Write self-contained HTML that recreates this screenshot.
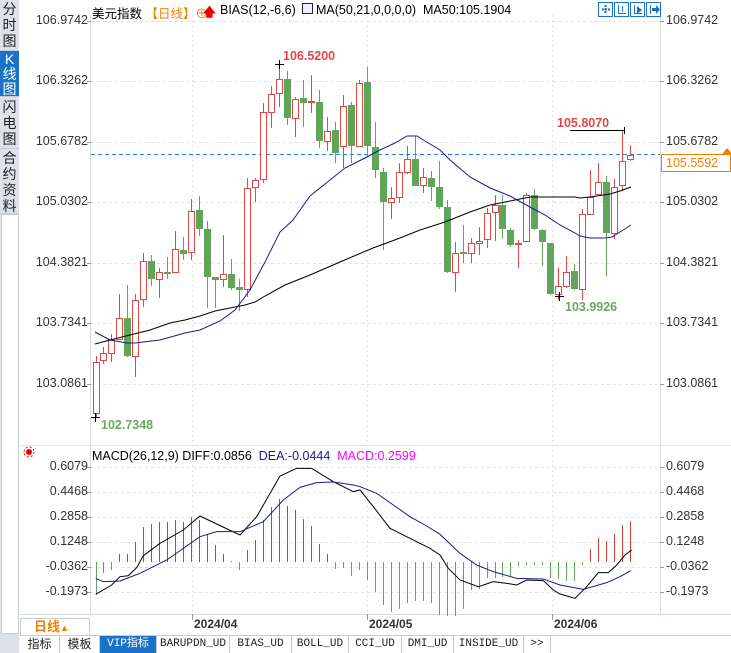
<!DOCTYPE html>
<html><head><meta charset="utf-8">
<style>
*{margin:0;padding:0;box-sizing:border-box}
body{width:731px;height:653px;overflow:hidden;background:#fff;font-family:"Liberation Sans","Noto Sans CJK SC",sans-serif;position:relative}
.side{position:absolute;left:0;top:0;width:19px;height:653px;background:#dde1ea}
.tab{position:absolute;left:0;width:19px;font-size:14px;line-height:16px;text-align:center;color:#222;border-bottom:1px solid #c8ccd6}
.ab{position:absolute;font-size:12.5px;color:#333}
.l{right:643px;text-align:right}
.r{left:666px}
.t{position:absolute;font-size:12.5px;white-space:nowrap;top:3px}
.btab{position:absolute;top:636px;height:17px;font-family:"Liberation Mono","Noto Sans CJK SC",monospace;font-size:11px;line-height:17px;text-align:center;border-right:1px solid #c8ccd6;color:#222;background:#fff}
</style></head><body>
<div class="side">
<div class="tab" style="top:1px;height:50px">分<br>时<br>图</div>
<div class="tab" style="top:51px;height:46px;background:#1a73c6;color:#fff;line-height:15px;padding-top:1px">K<br>线<br>图</div>
<div class="tab" style="top:99px;height:50px">闪<br>电<br>图</div>
<div class="tab" style="top:150px;height:64px">合<br>约<br>资<br>料</div>
<div style="position:absolute;top:214px;left:1px;width:18px;height:420px;background:#fff;border:1px solid #c8ccd6"></div>
</div>
<svg id="c" width="731" height="653" style="position:absolute;left:0;top:0"></svg>

<div class="t" style="left:92px">美元指数 <span style="color:#f08000">【日线】</span><span style="color:#f08000">⊕</span></div>
<div class="t" style="left:203px;color:#e00;font-weight:bold">🡅</div>
<div class="t" style="left:220px">BIAS(12,-6,6)</div>
<div style="position:absolute;left:302px;top:3px;width:11px;height:11px;border:1px solid #224;background:#eef"></div>
<div class="t" style="left:316px">MA(50,21,0,0,0,0)&nbsp; MA50:105.1904</div>

<div class="ab l" style="top:13px">106.9742</div>
<div class="ab l" style="top:73px">106.3262</div>
<div class="ab l" style="top:134px">105.6782</div>
<div class="ab l" style="top:194px">105.0302</div>
<div class="ab l" style="top:255px">104.3821</div>
<div class="ab l" style="top:315px">103.7341</div>
<div class="ab l" style="top:376px">103.0861</div>
<div class="ab r" style="top:13px">106.9742</div>
<div class="ab r" style="top:73px">106.3262</div>
<div class="ab r" style="top:134px">105.6782</div>
<div class="ab r" style="top:194px">105.0302</div>
<div class="ab r" style="top:255px">104.3821</div>
<div class="ab r" style="top:315px">103.7341</div>
<div class="ab r" style="top:376px">103.0861</div>
<div style="position:absolute;left:661px;top:154px;width:70px;height:18px;border:1px solid #f08000;color:#f08000;font-size:12.5px;line-height:16px;padding-left:4px;background:#fff">105.5592</div>

<div class="ab" style="left:283px;top:49px;color:#e04848;font-weight:bold">106.5200</div>
<div class="ab" style="left:557px;top:116px;color:#e04848;font-weight:bold">105.8070</div>
<div class="ab" style="left:565px;top:300px;color:#6aa860;font-weight:bold">103.9926</div>
<div class="ab" style="left:101px;top:418px;color:#6aa860;font-weight:bold">102.7348</div>

<div class="t" style="left:92px;top:449px">MACD(26,12,9) DIFF:0.0856 &nbsp;<span style="color:#1a1a90">DEA:-0.0444</span> &nbsp;<span style="color:#f0f">MACD:0.2599</span></div>
<div class="ab l" style="top:459px">0.6079</div>
<div class="ab l" style="top:484px">0.4468</div>
<div class="ab l" style="top:509px">0.2858</div>
<div class="ab l" style="top:534px">0.1248</div>
<div class="ab l" style="top:559px">-0.0362</div>
<div class="ab l" style="top:584px">-0.1973</div>
<div class="ab r" style="top:459px">0.6079</div>
<div class="ab r" style="top:484px">0.4468</div>
<div class="ab r" style="top:509px">0.2858</div>
<div class="ab r" style="top:534px">0.1248</div>
<div class="ab r" style="top:559px">-0.0362</div>
<div class="ab r" style="top:584px">-0.1973</div>

<div style="position:absolute;left:20px;top:618px;width:70px;height:18px;border:1px solid #c8ccd6;color:#f08000;font-weight:bold;font-size:13px;line-height:16px;padding-left:13px;background:#fff">日线<span style="font-size:9px">▲</span></div>
<div class="ab" style="left:194px;top:617px;font-weight:bold;font-size:12px">2024/04</div>
<div class="ab" style="left:369px;top:617px;font-weight:bold;font-size:12px">2024/05</div>
<div class="ab" style="left:554px;top:617px;font-weight:bold;font-size:12px">2024/06</div>

<div class="btab" style="left:20px;width:40px;font-family:'Liberation Sans','Noto Sans CJK SC',sans-serif;font-size:12px">指标</div>
<div class="btab" style="left:60px;width:40px;font-family:'Liberation Sans','Noto Sans CJK SC',sans-serif;font-size:12px">模板</div>
<div class="btab" style="left:100px;width:57px;background:#1a73c6;color:#fff">VIP指标</div>
<div class="btab" style="left:157px;width:73px">BARUPDN_UD</div>
<div class="btab" style="left:230px;width:62px">BIAS_UD</div>
<div class="btab" style="left:292px;width:57px">BOLL_UD</div>
<div class="btab" style="left:349px;width:53px">CCI_UD</div>
<div class="btab" style="left:402px;width:52px">DMI_UD</div>
<div class="btab" style="left:454px;width:70px">INSIDE_UD</div>
<div class="btab" style="left:524px;width:27px">&gt;&gt;</div>

<script>
var s=document.getElementById('c'),h='';
function L(x1,y1,x2,y2,c,w,d){h+='<line x1="'+x1+'" y1="'+y1+'" x2="'+x2+'" y2="'+y2+'" stroke="'+c+'" stroke-width="'+(w||1)+'"'+(d?' stroke-dasharray="'+d+'"':'')+'/>';}
function R(x,y,w,hh,c){h+='<rect x="'+x+'" y="'+y+'" width="'+w+'" height="'+hh+'" fill="'+c+'"/>';}
function P(pts,c){h+='<polyline fill="none" stroke="'+c+'" stroke-width="1" points="'+pts.map(function(p){return p.join(',')}).join(' ')+'"/>';}
L(90.5,15,90.5,615,'#d8dce4');L(660.5,15,660.5,615,'#d8dce4');
L(20,445.5,731,445.5,'#e4e6ea');L(20,614.5,731,614.5,'#d8dce4');L(20,635.5,731,635.5,'#c8ccd6');
[21,81,142,202,263,323,384,467,492,517,542,567,592].forEach(function(y){L(91,y+.5,660,y+.5,'#e2e2e2',1,'3,3');L(87,y+.5,91,y+.5,'#999');L(660,y+.5,664,y+.5,'#999')});
[192,367,552].forEach(function(x){L(x+.5,15,x+.5,614,'#e2e2e2',1,'2,3');L(x+.5,614,x+.5,620,'#999')});
L(91,154.5,660,154.5,'#1e7ff0',1,'4,3');
[598,614,630,646].forEach(function(x){h+='<rect x="'+(x+.5)+'" y="2.5" width="14" height="14" fill="#fff" stroke="#1a73c6"/>';});
L(602,9.5,610,9.5,'#1a73c6',2,'2,1');L(605.5,5,605.5,14,'#1a73c6',2,'2,1');
L(618.5,5,618.5,14,'#1a73c6');L(618,13.5,626,13.5,'#1a73c6');L(622.5,6,622.5,12,'#1a73c6');
L(634.5,5,634.5,14,'#1a73c6');L(634,13.5,642,13.5,'#1a73c6');h+='<path d="M637 6l5 4-5 4z" fill="#1a73c6"/>';
L(650.5,5,650.5,14,'#1a73c6');h+='<path d="M652 8h4v-3l4 4.5-4 4.5v-3h-4z" fill="#1a73c6"/>';
var C=[[362,413,356,418,'r'],[353,360,347,364,'r'],[339,353,334,362,'r'],[318,339,294,340,'r'],[318,356,285,357,'g'],[300,356,294,377,'r'],[261,299,253,307,'r'],[261,279,255,286,'g'],[272,279,268,298,'r'],[272,274,257,279,'g'],[249,272,231,272,'r'],[250,254,237,260,'g'],[211,252,199,260,'r'],[210,229,196,236,'g'],[229,277,221,308,'g'],[277,280,277,308,'g'],[274,279,235,287,'r'],[274,288,259,290,'g'],[287,290,279,311,'g'],[188,289,178,297,'r'],[180,187,178,202,'r'],[112,179,103,183,'r'],[94,112,86,128,'r'],[79,93,63,107,'r'],[79,118,71,125,'g'],[99,118,97,137,'r'],[98,103,80,127,'g'],[101,102,75,113,'r'],[102,141,90,148,'g'],[131,141,117,151,'r'],[130,153,122,163,'g'],[106,146,95,168,'r'],[105,146,102,163,'g'],[83,146,80,147,'r'],[82,146,67,157,'g'],[147,170,122,178,'g'],[172,202,168,250,'g'],[198,202,187,219,'r'],[172,197,163,203,'r'],[159,172,146,174,'r'],[159,186,136,186,'g'],[177,185,168,193,'r'],[178,187,171,201,'g'],[187,207,161,209,'g'],[207,272,200,273,'g'],[253,272,242,292,'r'],[252,254,225,263,'g'],[243,253,238,263,'r'],[241,243,227,255,'r'],[213,239,208,248,'r'],[205,212,195,241,'r'],[205,229,195,239,'g'],[230,245,228,247,'g'],[243,244,240,268,'r'],[195,241,193,242,'r'],[195,229,189,230,'g'],[230,242,229,266,'g'],[243,294,243,295,'g'],[286,294,268,300,'r'],[272,286,256,288,'r'],[271,289,264,290,'g'],[214,289,209,300,'r'],[197,214,170,215,'r'],[182,194,163,194,'r'],[182,233,176,276,'g'],[187,233,179,239,'r'],[161,185,131,191,'r'],[155,159,145,161,'r']];
var M=[-33,-11,-8,8,8,20,35,38,40,40,42,40,45,42,28,17,8,1,-8,12,22,42,55,63,56,52,43,36,18,8,-7,-6,-14,-8,-18,-30,-43,-50,-47,-41,-39,-39,-41,-53,-54,-54,-47,-28,-27,-16,-16,-15,-15,-4,-3,-3,-3,-16,-17,-19,-19,-3,13,24,21,28,37,41];
C.forEach(function(c,i){var xi=Math.round(95.5+7.98*i),x=xi+.5,col=c[4]=='r'?'#e04848':'#5fa55a';
 L(x,c[2],x,c[3],col);
 var hh=Math.max(1,c[1]-c[0]);
 if(c[4]=='r')h+='<rect x="'+(x-3)+'" y="'+(c[0]+.5)+'" width="6" height="'+hh+'" fill="#fff" stroke="'+col+'"/>';
 else R(xi-3,c[0],7,hh,col);
 var m=M[i];
 if(m>0)R(xi,562-m,1,m,'#d03c3c');else R(xi,562,1,-m,'#5fa55a');
});
P([[95,344],[110,340],[130,335],[150,330],[170,323],[185,320],[200,316],[215,311],[230,308],[245,305],[255,302],[265,296],[285,285],[310,275],[340,262],[373,248],[400,238],[420,230],[445,222],[470,212],[490,205],[510,201],[530,197],[575,197],[580,198],[590,197],[610,194],[620,191],[631,187]],'#000');
P([[95,332],[110,340],[127,343],[135,343],[160,340],[185,333],[200,330],[220,321],[235,310],[250,290],[265,262],[280,232],[293,220],[310,196],[330,180],[345,168],[365,158],[380,150],[395,143],[407,136],[417,136],[425,141],[440,150],[450,160],[470,177],[490,188],[510,196],[530,207],[545,215],[560,225],[575,233],[580,236],[590,238],[605,238],[612,237],[620,232],[631,225]],'#1a1a90');
L(275,64.5,284,64.5,'#000');L(279.5,60,279.5,69,'#000');
L(570,130.5,625,130.5,'#000');L(624.5,127,624.5,134,'#000');
L(555,296.5,564,296.5,'#000');L(559.5,292,559.5,301,'#000');
L(91,417.5,100,417.5,'#000');L(95.5,413,95.5,422,'#000');
var d1=[[287,583],[335,555],[360,530],[385,527],[410,503],[430,467],[480,430],[550,390],[600,348],[650,372],[720,405],[770,350],[840,228],[890,205],[935,205],[1000,245],[1060,275],[1080,270]].map(function(p){return[p[0]/3,400+p[1]/3]});
var d1b=[[0,150],[40,200],[90,265],[140,290],[170,305],[210,325],[240,345],[265,385],[300,420],[355,440],[400,425],[440,430],[470,435],[500,420],[550,422],[580,450],[600,462],[645,475],[680,440],[715,398],[745,398],[770,375],[795,345],[815,330]].map(function(p){return[360+p[0]/3,440+p[1]/3]});
P(d1.concat(d1b),'#000');
var e1=[[287,535],[310,545],[360,543],[420,520],[500,480],[600,410],[650,395],[720,395],[790,365],[850,300],[900,262],[950,248],[1000,246],[1060,255]].map(function(p){return[p[0]/3,400+p[1]/3]});
var e1b=[[0,140],[50,160],[100,195],[150,230],[200,258],[240,283],[300,340],[350,375],[400,395],[470,415],[550,417],[600,435],[670,448],[740,428],[780,410],[812,392]].map(function(p){return[360+p[0]/3,440+p[1]/3]});
P(e1.concat(e1b),'#1a1a90');
h+='<circle cx="29" cy="452" r="3" fill="#e00"/><circle cx="29" cy="452" r="5" fill="none" stroke="#e00" stroke-width="1" stroke-dasharray="2,2"/>';
h+='<path d="M722 154l5-6 5 6z" fill="#f08000"/>';
s.innerHTML=h;
</script>
</body></html>
